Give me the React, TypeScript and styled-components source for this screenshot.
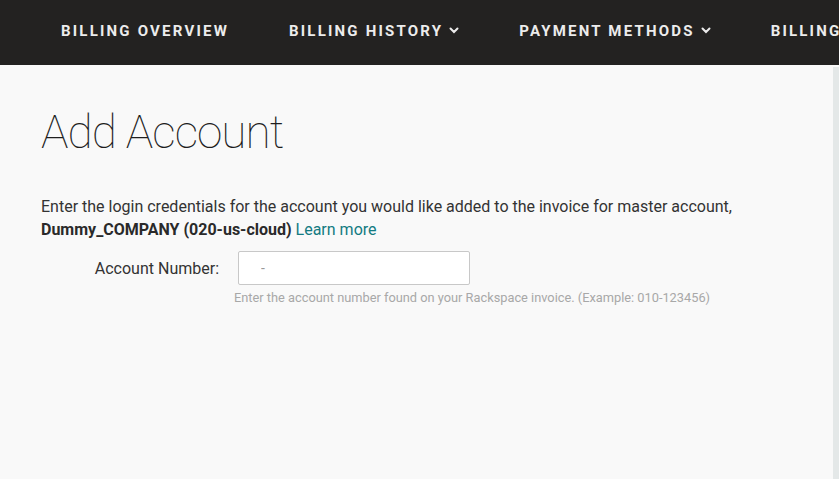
import React, { FC } from "react";
import styled, { createGlobalStyle } from "styled-components";

const GlobalStyle = createGlobalStyle`
  html, body {
    margin: 0;
    padding: 0;
    background: #f9f9f9;
    font-family: Roboto, "Liberation Sans", sans-serif;
    overflow: hidden;
  }
`;

const Page = styled.div`
  width: 839px;
  height: 479px;
  display: flex;
  flex-direction: column;
  background: #f9f9f9;
`;

const Nav = styled.nav`
  height: 65px;
  box-sizing: border-box;
  padding: 0 0 4px 61px;
  flex: none;
  background: #232221;
  display: flex;
  align-items: center;
  gap: 60px;
  overflow: hidden;
  white-space: nowrap;
`;

const NavItem = styled.a`
  display: flex;
  align-items: center;
  gap: 6px;
  color: #ececec;
  font-size: 15px;
  font-weight: 700;
  letter-spacing: 2.2px;
  text-decoration: none;
  flex: none;
`;

const Body = styled.div`
  flex: 1;
  display: flex;
`;

const Main = styled.main`
  flex: 1;
  padding: 0 41px;
`;

const SideStrip = styled.div`
  width: 6px;
  margin-top: 2px;
  background: #e4e8e8;
`;

const Title = styled.h1`
  margin: 39px 0 0;
  font-size: 46px;
  font-weight: 100;
  color: #1e1e1e;
  letter-spacing: -1px;
  line-height: 56px;
`;

const Intro = styled.p`
  margin: 35px 0 0;
  font-size: 16px;
  line-height: 23px;
  color: #333;
`;

const Strong = styled.strong`
  font-weight: 700;
  color: #2a2a2a;
`;

const Link = styled.a`
  color: #137b82;
  text-decoration: none;
`;

const FieldRow = styled.div`
  display: grid;
  grid-template-columns: 178px 232px;
  column-gap: 19px;
  margin-top: 10px;
  align-items: center;
`;

const Label = styled.label`
  text-align: right;
  font-size: 16px;
  color: #333;
`;

const Input = styled.input`
  box-sizing: border-box;
  height: 34px;
  width: 232px;
  border: 1px solid #c8c8c8;
  border-radius: 2px;
  background: #fff;
  padding: 0 22px;
  font-family: inherit;
  font-size: 14px;
  color: #333;
  outline: none;

  &::placeholder {
    color: #999;
  }
`;

const Help = styled.div`
  grid-column: 2;
  margin-left: -4px;
  margin-top: 5px;
  font-size: 12.8px;
  color: #a8a8a8;
  white-space: nowrap;
`;

const Chevron: FC = () => (
  <svg width="10" height="7" viewBox="0 0 10 7" fill="none">
    <path d="M1.5 1.5 L5 5 L8.5 1.5" stroke="#ececec" strokeWidth="2" strokeLinecap="round" />
  </svg>
);

const App: FC = () => {
  return (
    <>
      <GlobalStyle />
      <Page>
        <Nav>
          <NavItem>BILLING OVERVIEW</NavItem>
          <NavItem>
            BILLING HISTORY <Chevron />
          </NavItem>
          <NavItem>
            PAYMENT METHODS <Chevron />
          </NavItem>
          <NavItem>BILLING SETTINGS</NavItem>
        </Nav>
        <Body>
          <Main>
            <Title>Add Account</Title>
            <Intro>
              Enter the login credentials for the account you would like added to the invoice for master account,{" "}
              <Strong>Dummy_COMPANY (020-us-cloud)</Strong> <Link href="#">Learn more</Link>
            </Intro>
            <FieldRow>
              <Label htmlFor="acct">Account Number:</Label>
              <Input id="acct" placeholder="-" />
              <Help>Enter the account number found on your Rackspace invoice. (Example: 010-123456)</Help>
            </FieldRow>
          </Main>
          <SideStrip />
        </Body>
      </Page>
    </>
  );
};

export default App;
